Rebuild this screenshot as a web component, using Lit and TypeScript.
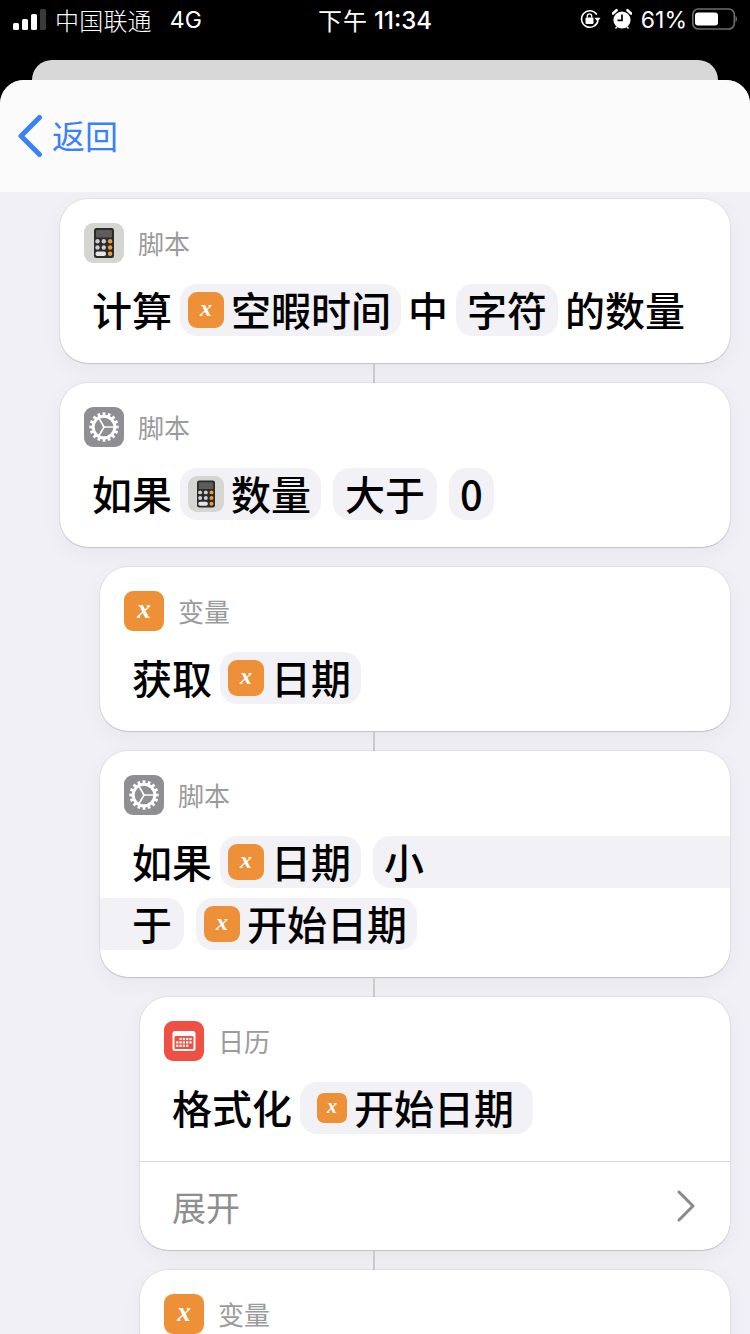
import { LitElement, html, css, svg } from "lit";
import { customElement } from "lit/decorators.js";

const xIcon = (cls: string) => html`<span class="ic x ${cls}"><i>x</i></span>`;

const calc = (cls: string) => html`<span class="ic calc ${cls}"><svg viewBox="0 0 40 40">
  <rect x="10" y="5" width="20" height="30" rx="2.5" fill="#2b2b2b"/>
  <rect x="12" y="7" width="16" height="7.500" rx="1" fill="#5d5d5d"/>
  ${[0, 1, 2].map((r) => [0, 1, 2].map((c) => (r === 2 && c < 2 ? "" : svg`<circle cx="${13.5 + c * 6.3}" cy="${18.2 + r * 6.3}" r="2.2" fill="${c === 2 ? "#f09a37" : "#cfcfcf"}"/>`)))}
  <rect x="11.500" y="28.600" width="10.500" height="4.400" rx="2" fill="#e6e6e6"/>
</svg></span>`;

const teeth = Array.from({ length: 16 }, (_, i) => (i * 360) / 16);
const gear = html`<span class="ic gear"><svg viewBox="0 0 40 40">
  <circle cx="20" cy="20" r="10.800" fill="none" stroke="#fff" stroke-width="3"/>
  ${teeth.map((a) => svg`<rect x="18.600" y="5.300" width="2.800" height="4.200" fill="#fff" transform="rotate(${a} 20 20)"/>`)}
  <path d="M20 20H30M20 20L15 11.300M20 20L15 28.700" stroke="#fff" stroke-width="1.700" fill="none"/>
</svg></span>`;

const cal = html`<span class="ic cal"><svg viewBox="0 0 40 40">
  <rect x="8.500" y="10" width="23" height="20" rx="2.500" fill="#fff"/>
  <rect x="10.500" y="15" width="19" height="13" rx="1" fill="#ee5143"/>
  ${[0, 1, 2].map((r) => [0, 1, 2, 3, 4].map((c) => ((r === 0 && c < 1) || (r === 2 && c > 3) ? "" : svg`<rect x="${12.2 + c * 3.3}" y="${16.900 + r * 3.4}" width="2.200" height="2.200" fill="#fff"/>`)))}
</svg></span>`;

@customElement("app-root")
export class AppRoot extends LitElement {
  static styles = css`
    :host {
      display: block;
      width: 750px;
      height: 1334px;
      overflow: hidden;
      background: #000;
      font-family: "Noto Sans CJK SC", "Liberation Sans", sans-serif;
    }
    .status {
      height: 60px;
      box-sizing: border-box;
      padding: 0 13px 22px 13px;
      display: grid;
      grid-template-columns: 1fr auto 1fr;
      align-items: center;
      color: #fff;
      font-size: 24px;
    }
    .st-left, .st-right { display: flex; align-items: center; }
    .st-right { justify-content: flex-end; }
    .signal { display: flex; align-items: flex-end; gap: 3px; height: 21px; margin: 0 9px 0 0; }
    .signal b { width: 6px; background: #fff; border-radius: 1.500px; }
    .signal b.off { background: #3a3a3a; }
    .carrier { font-size: 24px; letter-spacing: .2px; font-weight: 300; }
    .net { margin-left: 18px; padding-top: 2px; font-family: "Inter", sans-serif; font-size: 23px; }
    .time { font-size: 24px; letter-spacing: 1px; display: flex; align-items: center; gap: 6px; }
    .time span { font-family: "Inter", sans-serif; font-weight: 500; font-size: 24px; letter-spacing: 0; padding-top: 2px; }
    .pct { font-family: "Inter", sans-serif; font-size: 23px; margin: 0 5px 0 9px; padding-top: 1px; }
    .st-right svg { display: block; }
    .back {
      height: 20px;
      margin: 0 32px;
      background: #d8d8d8;
      border-radius: 20px 20px 0 0;
    }
    .sheet {
      background: #f0f0f6;
      border-radius: 24px 24px 0 0;
      overflow: hidden;
      height: 1254px;
    }
    .nav {
      height: 112px;
      box-sizing: border-box;
      background: #fbfbfc;
      display: flex;
      align-items: center;
      padding-left: 17px;
      gap: 8px;
      color: #3a82f7;
      font-size: 33px;
    }
    .nav svg { display: block; }
    .nav span { padding-bottom: 3px; }
    .list { padding: 7px 20px 0 60px; display: flex; flex-direction: column; }
    .card {
      background: #fff;
      border-radius: 28px;
      box-shadow: 0 0 0 1px rgba(0, 0, 0, .05), 0 1px 1px rgba(0, 0, 0, .13), 0 6px 22px rgba(0, 0, 0, .045);
      padding-top: 24px;
      overflow: hidden;
      flex: none;
    }
    .i1 { margin-left: 40px; }
    .i2 { margin-left: 80px; }
    .head { display: flex; align-items: center; gap: 14px; padding-left: 24px; height: 40px; }
    .head .label { font-size: 26px; color: #9b9b9b; line-height: 40px; }
    .row {
      display: flex;
      align-items: center;
      height: 52px;
      margin-top: 21px;
      padding-left: 32px;
      font-size: 40px;
      font-weight: 500;
      color: #000;
      line-height: 48px;
      white-space: nowrap;
    }
    .row + .row { margin-top: 10px; }
    .word, .txt { padding-bottom: 2px; }
    .end { height: 27px; }
    .pill {
      display: flex;
      align-items: center;
      height: 52px;
      padding: 0 11px;
      background: #f1f1f6;
      border-radius: 17px;
      margin-left: 8px;
      gap: 7px;
    }
    .pill.icon { padding-left: 8px; padding-right: 10px; }
    .pill.roomy { padding-right: 19px; }
    .pill.wide { padding: 0 12px; }
    .pill + .pill { margin-left: 12px; }
    .pill + .word { margin-left: 7px; }
    .pill.out { flex: 1; border-radius: 17px 0 0 17px; }
    .pill.in { margin-left: -32px; padding-left: 32px; border-radius: 0 17px 17px 0; padding-right: 12px; }
    .ic {
      flex: none;
      width: 40px;
      height: 40px;
      border-radius: 9px;
      display: flex;
      align-items: center;
      justify-content: center;
      overflow: hidden;
    }
    .ic svg { width: 100%; height: 100%; display: block; }
    .ic.s36 { width: 36px; height: 36px; border-radius: 9px; }
    .ic.s30 { width: 30px; height: 30px; border-radius: 7px; margin-left: 9px; }
    .x { background: #ee9037; }
    .x i {
      font: italic 700 27px/1 "Liberation Serif", serif;
      color: #fff;
      margin-top: -4px;
    }
    .s36 i { font-size: 24px; }
    .s30 i { font-size: 20px; }
    .calc { background: #d5d5d2; }
    .gear { background: #8e8e93; }
    .cal { background: #ee5143; }
    .divider { height: 1px; background: #d6d6d8; margin-top: 27px; }
    .more {
      height: 88px;
      display: flex;
      align-items: center;
      justify-content: space-between;
      padding: 0 34px 0 32px;
      font-size: 34px;
      color: #8e8e8e;
    }
    .more svg { display: block; }
    .link { height: 20px; flex: none; }
    .link.on { margin-left: 313px; width: 2px; background: #cbcbcd; }
  `;

  render() {
    return html`
      <div class="status">
        <div class="st-left">
          <div class="signal">
            <b style="height:7px"></b><b style="height:11px"></b><b style="height:16px"></b><b class="off" style="height:21px"></b>
          </div>
          <span class="carrier">中国联通</span><span class="net">4G</span>
        </div>
        <div class="time">下午<span>11:34</span></div>
        <div class="st-right">
          <svg width="22" height="22" viewBox="0 0 22 22" fill="none">
            <path d="M17.800 6.500A8.300 8.300 0 1 0 19 12.500" stroke="#fff" stroke-width="1.500"/>
            <path d="M15.500 9.800H21.500L18.500 13.800Z" fill="#fff"/>
            <rect x="6.500" y="9.500" width="8" height="6.500" rx="1" fill="#fff"/>
            <path d="M8.300 9.500V8a2.200 2.200 0 0 1 4.400 0v1.500" stroke="#fff" stroke-width="1.300"/>
          </svg>
          <svg style="margin-left:11px" width="20" height="22" viewBox="0 0 20 22" fill="none">
            <circle cx="10" cy="12" r="8.600" fill="#fff"/>
            <path d="M10 6.500V12.300H5.500" stroke="#000" stroke-width="1.700"/>
            <path d="M1 5.500 4.500 2.200 M19 5.500 15.500 2.200" stroke="#fff" stroke-width="2.600" stroke-linecap="round"/>
            <path d="M3.500 20.500 5 18.800 M16.500 20.500 15 18.800" stroke="#fff" stroke-width="1.500"/>
          </svg>
          <span class="pct">61%</span>
          <svg width="45" height="22" viewBox="0 0 45 22" fill="none">
            <rect x=".8" y="1" width="41.500" height="20" rx="5.500" stroke="#6e6e6e" stroke-width="1.600"/>
            <rect x="3" y="4.500" width="23" height="13" rx="3" fill="#fff"/>
            <path d="M43.500 8c1 .5 1.500 1.500 1.500 3s-.5 2.500-1.500 3Z" fill="#6e6e6e"/>
          </svg>
        </div>
      </div>
      <div class="back"></div>
      <div class="sheet">
        <div class="nav">
          <svg width="27" height="44" viewBox="0 0 27 44" fill="none">
            <path d="M22.500 3.500 4 22 22.500 40.500" stroke="#3a82f7" stroke-width="5" stroke-linecap="round" stroke-linejoin="round"/>
          </svg>
          <span>返回</span>
        </div>
        <div class="list">
          <div class="card">
            <div class="head">${calc("")}<span class="label">脚本</span></div>
            <div class="row">
              <span class="word">计算</span>
              <span class="pill icon">${xIcon("s36")}<span class="txt">空暇时间</span></span>
              <span class="word">中</span>
              <span class="pill"><span class="txt">字符</span></span>
              <span class="word">的数量</span>
            </div>
            <div class="end"></div>
          </div>
          <div class="link on"></div>
          <div class="card">
            <div class="head">${gear}<span class="label">脚本</span></div>
            <div class="row">
              <span class="word">如果</span>
              <span class="pill icon">${calc("s36")}<span class="txt">数量</span></span>
              <span class="pill wide"><span class="txt">大于</span></span>
              <span class="pill"><span class="txt">0</span></span>
            </div>
            <div class="end"></div>
          </div>
          <div class="link"></div>
          <div class="card i1">
            <div class="head">${xIcon("")}<span class="label">变量</span></div>
            <div class="row">
              <span class="word">获取</span>
              <span class="pill icon">${xIcon("s36")}<span class="txt">日期</span></span>
            </div>
            <div class="end"></div>
          </div>
          <div class="link on"></div>
          <div class="card i1">
            <div class="head">${gear}<span class="label">脚本</span></div>
            <div class="row">
              <span class="word">如果</span>
              <span class="pill icon">${xIcon("s36")}<span class="txt">日期</span></span>
              <span class="pill out"><span class="txt">小</span></span>
            </div>
            <div class="row">
              <span class="pill in"><span class="txt">于</span></span>
              <span class="pill icon">${xIcon("s36")}<span class="txt">开始日期</span></span>
            </div>
            <div class="end"></div>
          </div>
          <div class="link on"></div>
          <div class="card i2">
            <div class="head">${cal}<span class="label">日历</span></div>
            <div class="row">
              <span class="word">格式化</span>
              <span class="pill icon roomy">${xIcon("s30")}<span class="txt">开始日期</span></span>
            </div>
            <div class="divider"></div>
            <div class="more">
              <span>展开</span>
              <svg width="20" height="32" viewBox="0 0 20 32" fill="none">
                <path d="M3 2 17 16 3 30" stroke="#8a8a8a" stroke-width="3" stroke-linecap="round" stroke-linejoin="round"/>
              </svg>
            </div>
          </div>
          <div class="link on"></div>
          <div class="card i2">
            <div class="head">${xIcon("")}<span class="label">变量</span></div>
            <div class="end"></div>
          </div>
        </div>
      </div>
    `;
  }
}
